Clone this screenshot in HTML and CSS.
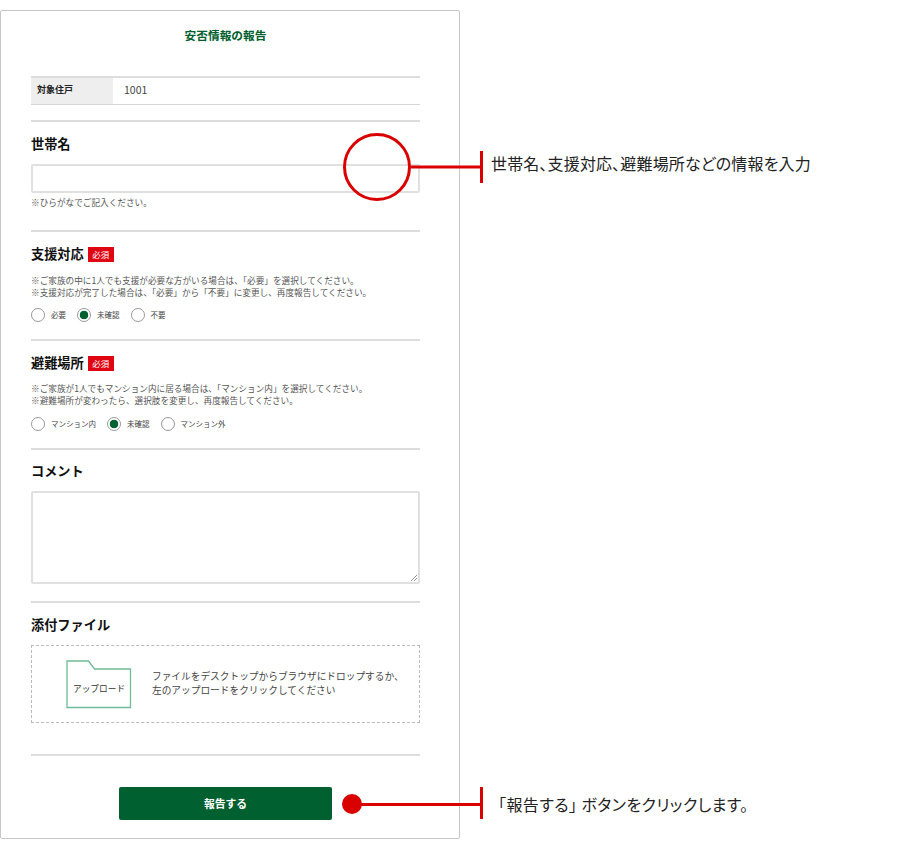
FILE: index.html
```html
<!DOCTYPE html>
<html lang="ja">
<head>
<meta charset="utf-8">
<title>安否情報の報告</title>
<link rel="stylesheet" href="styles.css">
</head>
<body>
<div class="stage">
  <main class="card">
    <h1 class="title">安否情報の報告</h1>
    <div class="info-row">
      <div class="info-label">対象住戸</div>
      <div class="info-value">1001</div>
    </div>
    <section class="sec sec-name">
      <h2 class="head">世帯名</h2>
      <div class="input"></div>
      <p class="note note-single">※ひらがなでご記入ください。</p>
    </section>
    <section class="sec sec-support">
      <h2 class="head">支援対応<span class="req">必須</span></h2>
      <p class="note">※ご家族の中に1人でも支援が必要な方がいる場合は、「必要」を選択してください。<br>※支援対応が完了した場合は、「必要」から「不要」に変更し、再度報告してください。</p>
      <div class="radios">
        <span class="radio"><i class="dot"></i>必要</span>
        <span class="radio"><i class="dot on"></i>未確認</span>
        <span class="radio"><i class="dot"></i>不要</span>
      </div>
    </section>
    <section class="sec sec-place">
      <h2 class="head">避難場所<span class="req">必須</span></h2>
      <p class="note">※ご家族が1人でもマンション内に居る場合は、「マンション内」を選択してください。<br>※避難場所が変わったら、選択肢を変更し、再度報告してください。</p>
      <div class="radios">
        <span class="radio"><i class="dot"></i>マンション内</span>
        <span class="radio"><i class="dot on"></i>未確認</span>
        <span class="radio"><i class="dot"></i>マンション外</span>
      </div>
    </section>
    <section class="sec sec-comment">
      <h2 class="head">コメント</h2>
      <div class="textarea">
        <svg class="grip" width="8" height="8" viewBox="0 0 8 8"><path d="M1 7 7 1M4 7 7 4" stroke="#999" fill="none"/></svg>
      </div>
    </section>
    <section class="sec sec-file">
      <h2 class="head">添付ファイル</h2>
      <div class="drop">
        <div class="folder">
          <svg class="folder-shape" width="66" height="49" viewBox="0 0 66 49"><path d="M1 1H22.500L28.500 9H64.500V47.500H1Z" fill="#fff" stroke="#6fba97" stroke-width="1.300"/></svg>
          <span class="folder-text">アップロード</span>
        </div>
        <p class="drop-text">ファイルをデスクトップからブラウザにドロップするか、<br>左のアップロードをクリックしてください</p>
      </div>
    </section>
    <div class="actions">
      <button class="submit" type="button">報告する</button>
    </div>
  </main>

  <svg class="callouts" width="500" height="849" viewBox="0 0 500 849">
    <circle cx="377" cy="167" r="32.500" fill="none" stroke="#d90000" stroke-width="3"/>
    <path d="M411 167H481" stroke="#d90000" stroke-width="3"/>
    <path d="M481.500 151V183" stroke="#d90000" stroke-width="3"/>
    <circle cx="352" cy="804" r="10" fill="#d90000"/>
    <path d="M360 804.500H481" stroke="#d90000" stroke-width="3"/>
    <path d="M481.500 787V819" stroke="#d90000" stroke-width="3"/>
  </svg>
  <p class="callout-text callout-a">世帯名、支援対応、避難場所などの情報を入力</p>
  <p class="callout-text callout-b">「報告する」 ボタンをクリックします。</p>
</div>
</body>
</html>
```

FILE: styles.css
```css
* { box-sizing: border-box; }
html, body { margin: 0; padding: 0; background: #fff; }
body {
  font-family: "Noto Sans CJK JP", "Liberation Sans", sans-serif;
  color: #222;
}
.stage { position: relative; width: 900px; height: 849px; padding-top: 10px; }
.card {
  width: 460px;
  height: 829px;
  border: 1px solid #c6c6c6;
  border-radius: 2px;
  padding: 0 39px 0 30px;
  background: #fff;
}
.title {
  margin: 0;
  height: 65px;
  padding-top: 15px;
  text-align: center;
  font-size: 11.700px;
  line-height: 18px;
  font-weight: 700;
  color: #00602f;
}
.info-row {
  display: flex;
  height: 29px;
  border-top: 2px solid #ddd;
  border-bottom: 1px solid #d6d6d6;
}
.info-label {
  width: 82px;
  padding: 1px 0 0 6px;
  background: #eee;
  font-size: 9px;
  line-height: 22px;
  font-weight: 700;
}
.info-value {
  padding: 1px 0 0 11px;
  font-size: 10.500px;
  line-height: 22px;
  color: #444;
}
.sec { border-top: 2px solid #ddd; }
.sec-name { margin-top: 15px; height: 110px; padding-top: 12px; }
.sec-support { height: 109px; padding-top: 12px; }
.sec-place { height: 109px; padding-top: 12px; }
.sec-comment { height: 153px; padding-top: 11px; }
.sec-file { height: 153px; padding-top: 12px; }
.head {
  display: flex;
  align-items: center;
  margin: 0;
  height: 20px;
  font-size: 13.200px;
  line-height: 20px;
  font-weight: 700;
  color: #111;
}
.req {
  display: block;
  width: 26px;
  height: 15px;
  margin-left: 4px;
  background: #e00512;
  color: #fff;
  text-align: center;
  font-size: 8.500px;
  line-height: 15px;
  font-weight: 400;
}
.input {
  height: 29px;
  margin-top: 10px;
  border: 2px solid #e0e0e0;
  border-radius: 2px;
}
.note {
  margin: 10px 0 0;
  font-size: 8.650px;
  line-height: 12px;
  color: #555;
  white-space: nowrap;
}
.sec-place .note { margin-top: 9px; }
.note-single { margin-top: 3px; }
.radios {
  display: flex;
  gap: 11px;
  margin-top: 9px;
  height: 16px;
}
.sec-place .radios { margin-top: 10px; }
.radio {
  display: flex;
  align-items: center;
  gap: 6px;
  font-size: 7.500px;
  line-height: 16px;
  color: #444;
}
.dot {
  display: block;
  width: 14px;
  height: 14px;
  border: 1px solid #999;
  border-radius: 50%;
  background: #fff;
}
.dot.on { background: radial-gradient(circle, #00602f 0 4px, #fff 4.600px); }
.textarea {
  position: relative;
  height: 93px;
  margin-top: 10px;
  border: 2px solid #e0e0e0;
  border-radius: 2px;
}
.grip { position: absolute; right: 0; bottom: 0; }
.drop {
  display: flex;
  align-items: center;
  height: 78px;
  margin-top: 10px;
  padding-left: 34px;
  border: 1px dashed #bbb;
}
.folder {
  position: relative;
  display: flex;
  align-items: flex-end;
  justify-content: center;
  width: 66px;
  height: 49px;
  padding-bottom: 13px;
}
.folder-shape { position: absolute; left: 0; top: 0; }
.folder-text {
  position: relative;
  font-size: 8.700px;
  line-height: 14px;
  color: #333;
}
.drop-text {
  margin: 0 0 2px 20px;
  font-size: 9.700px;
  line-height: 14.500px;
  color: #444;
  white-space: nowrap;
}
.actions {
  border-top: 2px solid #ddd;
  padding: 31px 0 0 88px;
}
.submit {
  display: block;
  width: 213px;
  height: 33px;
  padding: 0;
  border: 0;
  border-radius: 2px;
  background: #00602f;
  color: #fff;
  font-family: inherit;
  font-size: 10.800px;
  font-weight: 700;
  line-height: 33px;
}
.callouts { position: absolute; left: 0; top: 0; pointer-events: none; }
.callout-text {
  position: absolute;
  margin: 0;
  font-size: 16px;
  line-height: 22px;
  letter-spacing: 0.150px;
  color: #222;
  white-space: nowrap;
  font-feature-settings: "palt";
}
.callout-a { left: 491px; top: 152px; }
.callout-b { left: 498px; top: 793px; letter-spacing: 0.430px; }
```
